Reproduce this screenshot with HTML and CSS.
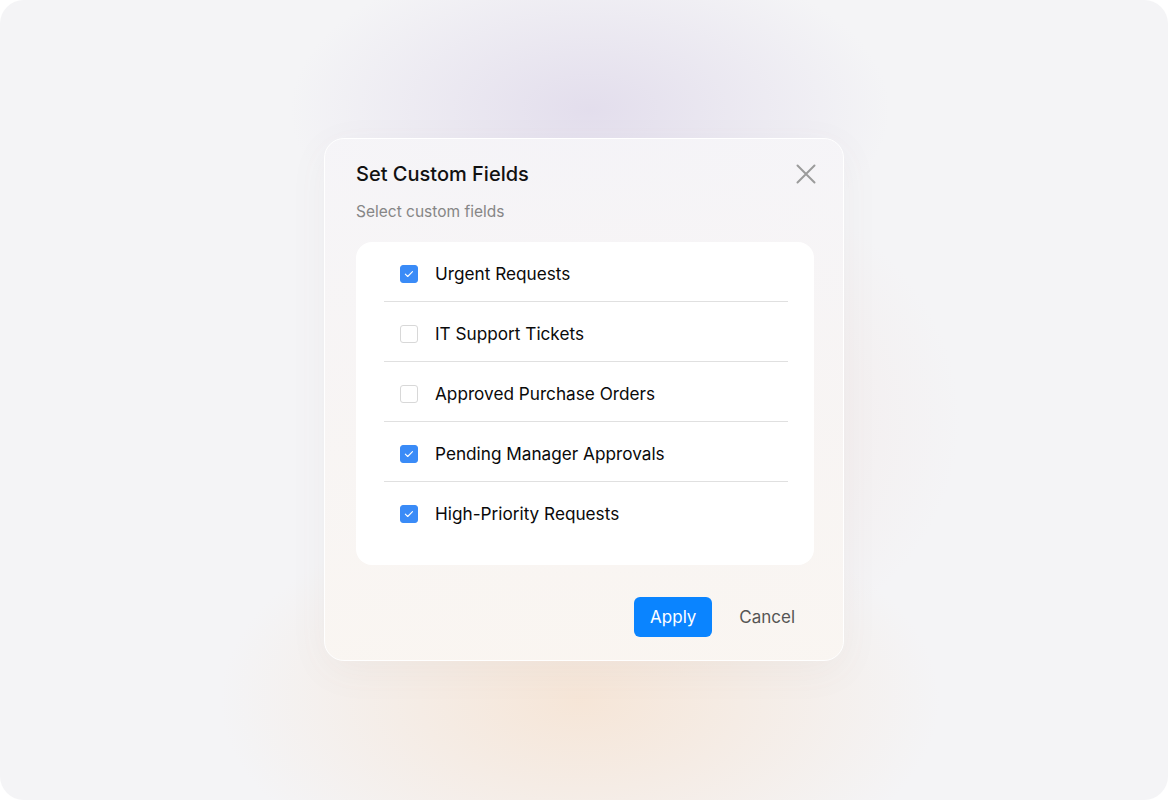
FILE: index.html
```html
<!DOCTYPE html>
<html lang="en">
<head>
    <meta charset="UTF-8">
    <meta name="viewport" content="width=device-width, initial-scale=1.0">
    <title>Set Custom Fields</title>
    <link rel="stylesheet" href="styles.css">
</head>
<body>
    <div class="backdrop">
        <div class="modal">
            <div class="modal-header">
                <h2 class="modal-title">Set Custom Fields</h2>
                <button class="close-button" type="button" aria-label="Close">
                    <svg width="20" height="20" viewBox="0 0 20 20" fill="none">
                        <path d="M1.5 1.5L18.5 18.5M18.5 1.5L1.5 18.5" stroke="#9b9b9b" stroke-width="2" stroke-linecap="round"/>
                    </svg>
                </button>
            </div>
            <p class="modal-subtitle">Select custom fields</p>

            <div class="field-list">
                <label class="field-row">
                    <input type="checkbox" class="field-check" checked>
                    <span class="field-label">Urgent Requests</span>
                </label>
                <label class="field-row">
                    <input type="checkbox" class="field-check">
                    <span class="field-label">IT Support Tickets</span>
                </label>
                <label class="field-row">
                    <input type="checkbox" class="field-check">
                    <span class="field-label">Approved Purchase Orders</span>
                </label>
                <label class="field-row">
                    <input type="checkbox" class="field-check" checked>
                    <span class="field-label">Pending Manager Approvals</span>
                </label>
                <label class="field-row">
                    <input type="checkbox" class="field-check" checked>
                    <span class="field-label">High-Priority Requests</span>
                </label>
            </div>

            <div class="modal-actions">
                <button type="button" class="btn btn-primary">Apply</button>
                <button type="button" class="btn btn-plain">Cancel</button>
            </div>
        </div>
    </div>
</body>
</html>
```

FILE: styles.css
```css
:root {
    --page-bg: #f4f4f6;
    --text-primary: #0a0a0a;
    --text-secondary: #868686;
    --divider: #e0e0e0;
    --accent: #0a84ff;
    --check: #3a8bf7;
}

* {
    margin: 0;
    padding: 0;
    box-sizing: border-box;
}

body {
    font-family: Inter, "Noto Sans", sans-serif;
    background-color: #ffffff;
    color: var(--text-primary);
    width: 1168px;
    height: 800px;
    overflow: hidden;
}

.backdrop {
    width: 1168px;
    height: 800px;
    border-radius: 24px;
    background-color: var(--page-bg);
    background-image:
        radial-gradient(ellipse 300px 160px at 590px 110px, rgba(224, 218, 235, 0.85), rgba(224, 218, 235, 0) 100%),
        radial-gradient(ellipse 360px 200px at 580px 700px, rgba(246, 228, 212, 0.9), rgba(246, 228, 212, 0) 100%),
        radial-gradient(ellipse 320px 260px at 640px 420px, rgba(242, 226, 222, 0.7), rgba(242, 226, 222, 0) 100%);
    display: flex;
    align-items: flex-start;
    justify-content: center;
    padding-top: 138px;
}

.modal {
    width: 520px;
    height: 523px;
    border: 1px solid #ffffff;
    border-radius: 20px;
    background: linear-gradient(180deg, rgba(246, 245, 248, 0.92) 0%, rgba(248, 245, 244, 0.92) 55%, rgba(250, 246, 242, 0.95) 100%);
    box-shadow: 0 10px 40px rgba(120, 100, 90, 0.05);
    padding: 21px 29px 0 31px;
}

.modal-header {
    display: flex;
    align-items: center;
    justify-content: space-between;
}

.modal-title {
    font-size: 20px;
    line-height: 28px;
    font-weight: 500;
    color: #111111;
}

.close-button {
    width: 20px;
    height: 20px;
    border: none;
    background: none;
    cursor: pointer;
    display: flex;
    margin-right: -2px;
}

.modal-subtitle {
    margin-top: 14px;
    font-size: 15.5px;
    line-height: 20px;
    color: var(--text-secondary);
}

.field-list {
    margin-top: 20px;
    background-color: #ffffff;
    border-radius: 16px;
    padding: 0 26px 24px 28px;
}

.field-row {
    display: flex;
    align-items: center;
    gap: 17px;
    height: 60px;
    padding: 5px 0 0 16px;
    border-bottom: 1.5px solid var(--divider);
    cursor: pointer;
}

.field-row:last-child {
    border-bottom: none;
    height: 59px;
}

.field-check {
    appearance: none;
    -webkit-appearance: none;
    width: 18px;
    height: 18px;
    border: 1.5px solid #d8d8d8;
    border-radius: 3px;
    background-color: #ffffff;
    flex-shrink: 0;
}

.field-check:checked {
    border-color: var(--check);
    background-color: var(--check);
    background-image: url("data:image/svg+xml,%3Csvg xmlns='http://www.w3.org/2000/svg' width='18' height='18' viewBox='0 0 18 18'%3E%3Cpath d='M5.3 9.2l2.4 2.3 4.8-4.9' fill='none' stroke='white' stroke-width='1.1' stroke-linecap='round' stroke-linejoin='round'/%3E%3C/svg%3E");
    background-position: center;
    background-repeat: no-repeat;
}

.field-label {
    font-size: 17.2px;
    line-height: 24px;
    font-weight: 400;
    color: var(--text-primary);
}

.modal-actions {
    margin-top: 32px;
    display: flex;
    justify-content: flex-end;
    gap: 8px;
}

.btn {
    height: 40px;
    border: none;
    border-radius: 6px;
    font-family: inherit;
    font-size: 17px;
    cursor: pointer;
}

.btn-primary {
    width: 78px;
    background-color: var(--accent);
    color: #ffffff;
}

.btn-plain {
    padding: 0 19px;
    background: none;
    color: #555555;
}
```
